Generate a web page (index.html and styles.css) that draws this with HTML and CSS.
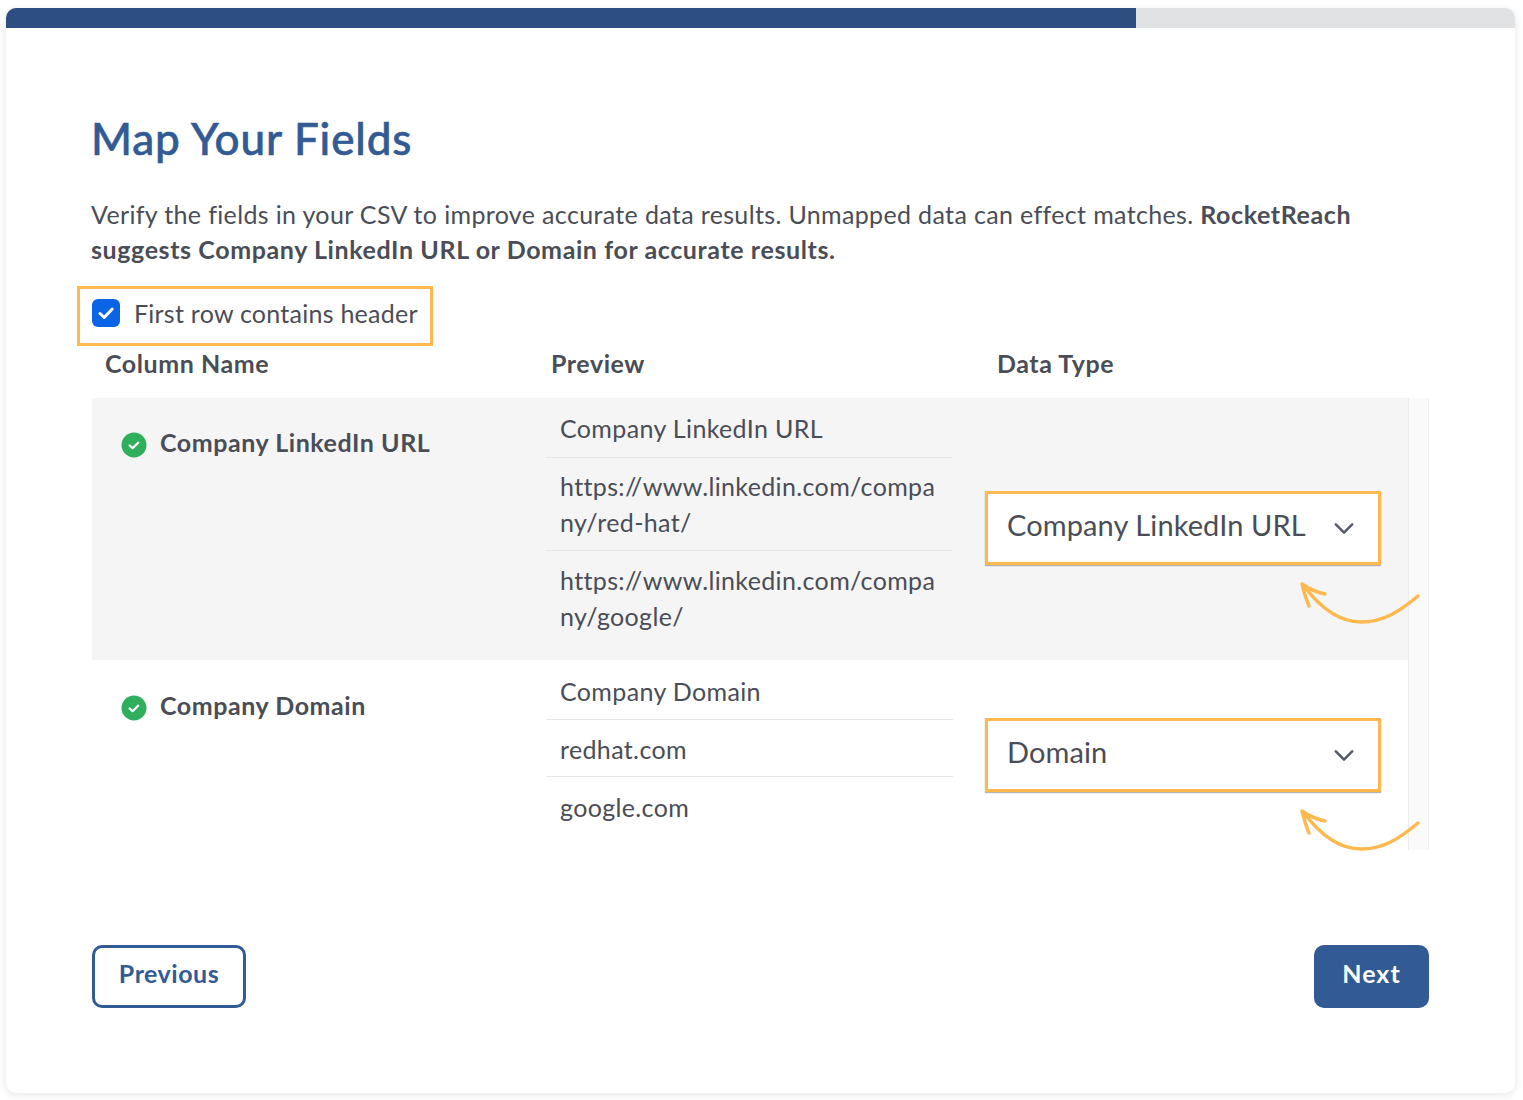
FILE: index.html
```html
<!DOCTYPE html>
<html lang="en">
<head>
<meta charset="utf-8">
<title>Map Your Fields</title>
<link rel="stylesheet" href="styles.css">
</head>
<body>
<main class="card">
  <div class="progress"><div class="progress-fill"></div></div>
  <div class="content">
    <h1 class="title">Map Your Fields</h1>
    <p class="intro">Verify the fields in your CSV to improve accurate data results. Unmapped data can effect matches. <strong>RocketReach suggests Company LinkedIn URL or Domain for accurate results.</strong></p>
    <label class="header-toggle">
      <span class="checkbox"><svg viewBox="0 0 28 28" width="28" height="28"><path d="M8 14.5l4.2 4L20.2 10" fill="none" stroke="#fff" stroke-width="3" stroke-linecap="round" stroke-linejoin="round"/></svg></span>
      <span>First row contains header</span>
    </label>
    <div class="heads">
      <div class="head head-name">Column Name</div>
      <div class="head head-preview">Preview</div>
      <div class="head">Data Type</div>
    </div>
    <div class="table">
      <div class="rows">
        <section class="row row-shaded">
          <div class="name">
            <svg class="ok" viewBox="0 0 26 26" width="26" height="26"><circle cx="13" cy="13" r="12.5" fill="#2fae5b"/><path d="M8.6 13.4l3 2.8 5.6-5.6" fill="none" stroke="#fff" stroke-width="2.2" stroke-linecap="round" stroke-linejoin="round"/></svg>
            <span>Company LinkedIn URL</span>
          </div>
          <div class="preview">
            <div class="cell">Company LinkedIn URL</div>
            <div class="cell">https://www.linkedin.com/company/red-hat/</div>
            <div class="cell">https://www.linkedin.com/company/google/</div>
          </div>
          <div class="type">
            <div class="select">
              <span class="select-value">Company LinkedIn URL</span>
              <svg class="chev" viewBox="0 0 22 14" width="20" height="13"><path d="M2 2.5l9 9 9-9" fill="none" stroke="#555b68" stroke-width="2.8" stroke-linecap="round" stroke-linejoin="round"/></svg>
              <svg class="arrow" viewBox="0 0 122 46" width="122" height="46"><path d="M119 15C100 31 84 41 62 41C41 41 23 29 5 5M3 3C10 8 17 11 26 13M3 3C5 11 7 18 10 25" fill="none" stroke="#fdb84e" stroke-width="3.4" stroke-linecap="round"/></svg>
            </div>
          </div>
        </section>
        <section class="row row-plain">
          <div class="name">
            <svg class="ok" viewBox="0 0 26 26" width="26" height="26"><circle cx="13" cy="13" r="12.5" fill="#2fae5b"/><path d="M8.6 13.4l3 2.8 5.6-5.6" fill="none" stroke="#fff" stroke-width="2.2" stroke-linecap="round" stroke-linejoin="round"/></svg>
            <span>Company Domain</span>
          </div>
          <div class="preview">
            <div class="cell">Company Domain</div>
            <div class="cell">redhat.com</div>
            <div class="cell">google.com</div>
          </div>
          <div class="type">
            <div class="select">
              <span class="select-value">Domain</span>
              <svg class="chev" viewBox="0 0 22 14" width="20" height="13"><path d="M2 2.5l9 9 9-9" fill="none" stroke="#555b68" stroke-width="2.8" stroke-linecap="round" stroke-linejoin="round"/></svg>
              <svg class="arrow" viewBox="0 0 122 46" width="122" height="46"><path d="M119 15C100 31 84 41 62 41C41 41 23 29 5 5M3 3C10 8 17 11 26 13M3 3C5 11 7 18 10 25" fill="none" stroke="#fdb84e" stroke-width="3.4" stroke-linecap="round"/></svg>
            </div>
          </div>
        </section>
      </div>
      <div class="scrollbar"></div>
    </div>
    <div class="actions">
      <button class="btn btn-outline" type="button">Previous</button>
      <button class="btn btn-solid" type="button">Next</button>
    </div>
  </div>
</main>
</body>
</html>
```
FILE: styles.css
```css
* { box-sizing: border-box; }
html, body { margin: 0; padding: 0; background: #fff; }
body {
  padding: 8px 8px 0 6px;
  height: 1100px;
  overflow: hidden;
  font-family: Lato, "Noto Sans", sans-serif;
  color: #4a4d56;
}
.card {
  height: 1085px;
  background: #fff;
  border-radius: 10px;
  box-shadow: 0 2px 8px rgba(0, 0, 0, 0.1);
  overflow: hidden;
}
.progress { height: 20px; background: #e1e2e3; }
.progress-fill { width: 1130px; height: 100%; background: #2c4e80; }
.content { padding: 0 86px; }
.title {
  margin: 0 0 0 -1px;
  padding-top: 83px;
  height: 155px;
  font-size: 44px;
  line-height: 54px;
  font-weight: 500;
  letter-spacing: 0.85px;
  -webkit-text-stroke: 0.6px #325a94;
  color: #325a94;
}
.intro {
  margin: 0 0 0 -1px;
  padding-top: 14px;
  font-size: 25px;
  line-height: 35px;
  width: 1290px;
  letter-spacing: 0.35px;
}
.intro strong { font-weight: 700; letter-spacing: 0.6px; }
.header-toggle {
  display: inline-flex;
  align-items: center;
  gap: 14px;
  margin: 19px 0 0 -15px;
  height: 60px;
  width: 356px;
  padding: 0 12px 6px;
  border: 3px solid #fdb84e;
  font-size: 25px;
  letter-spacing: 0.25px;
  white-space: nowrap;
}
.checkbox {
  width: 28px;
  height: 28px;
  background: #0b63e5;
  border-radius: 6px;
  display: block;
  flex: none;
}
.checkbox svg { display: block; }
.heads {
  display: flex;
  height: 52px;
  align-items: center;
  padding: 0 0 18px 13px;
  font-size: 25px;
  font-weight: 700;
  letter-spacing: 0.55px;
}
.head-name { width: 446px; }
.head-preview { width: 446px; }
.table { display: flex; height: 452px; }
.rows { width: 1316px; }
.scrollbar {
  width: 21px;
  background: #fafafa;
  border-left: 1px solid #ececec;
  border-right: 1px solid #f1f1f1;
}
.row { display: flex; }
.row-shaded { background: #f5f5f6; height: 262px; }
.row-plain { height: 190px; }
.name {
  width: 454px;
  padding: 26px 0 0 29px;
  display: flex;
  align-items: flex-start;
  gap: 13px;
  font-size: 25px;
  font-weight: 700;
  line-height: 36px;
  letter-spacing: 0.55px;
}
.row-plain .name { padding-top: 27px; }
.ok { flex: none; margin-top: 8px; }
.preview { width: 407px; }
.cell {
  padding: 11px 14px 9px;
  font-size: 25px;
  line-height: 36px;
  letter-spacing: 0.36px;
  overflow-wrap: anywhere;
  border-bottom: 1px solid #e6e7ec;
}
.row-shaded .cell { padding-top: 10px; padding-bottom: 10px; }
.cell:first-child, .row-shaded .cell:first-child { padding-top: 12px; padding-bottom: 11px; }
.row-plain .cell:first-child { padding-top: 13px; padding-bottom: 10px; }
.cell:last-child { padding-top: 12px; border-bottom: 0; }
.row-shaded .cell:last-child { padding-top: 11px; }
.type {
  flex: 1;
  padding: 0 27px 0 32px;
  display: flex;
  align-items: center;
}
.row-shaded .type { padding-bottom: 2px; }
.select {
  position: relative;
  width: 396px;
  height: 74px;
  padding: 0 24px 0 19px;
  display: flex;
  align-items: center;
  justify-content: space-between;
  background: #fff;
  border: 3px solid #fdb84e;
  box-shadow: 0 1px 1px rgba(70, 70, 80, 0.4);
  font-size: 29px;
  letter-spacing: 0.1px;
}
.select-value { margin-bottom: 7px; }
.arrow { position: absolute; left: 311px; top: 87px; }
.actions {
  display: flex;
  justify-content: space-between;
  margin-top: 95px;
}
.btn {
  height: 63px;
  padding: 0 0 8px;
  border-radius: 10px;
  font-family: Lato, "Noto Sans", sans-serif;
  font-size: 25px;
  font-weight: 700;
}
.btn-outline { width: 154px; background: #fff; border: 3px solid #325a94; color: #325a94; letter-spacing: 0.5px; }
.btn-solid { width: 115px; background: #325a94; border: 0; color: #fff; letter-spacing: 1px; }
```
